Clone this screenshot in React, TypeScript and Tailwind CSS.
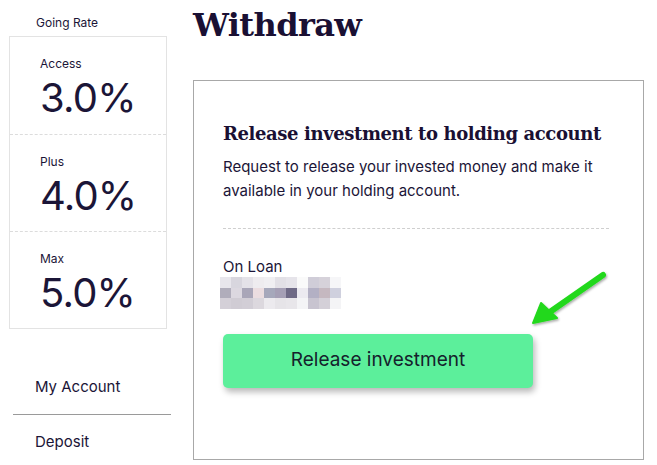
import type { ReactNode } from 'react'

const rates = [
  { label: 'Access', value: '3.0%' },
  { label: 'Plus', value: '4.0%' },
  { label: 'Max', value: '5.0%' },
]

// pixelated "amount" — the screenshot blurs it out
const blurRows = [
  ['#e8e6ec', '#d8d6de', '#e4e2e8', '#eeecef', '#f0eff2', '#e2e0e6', '#e6e4ea', '#fafafa', '#d0cdd8', '#d6d2da', '#f6f6f8'],
  ['#b0adbb', '#dcd8e0', '#a9a6b8', '#ebdde0', '#a6a8bb', '#a59fb5', '#6f6a86', '#eceaf0', '#b3b0c4', '#c5b8c0', '#cfd0de'],
  ['#d4d0d8', '#d0ccd4', '#d2ced6', '#dcd8de', '#eceaee', '#e6e4e8', '#e8e6ea', '#f4f4f6', '#c8c4d0', '#d4d0d8', '#f4f4f6'],
]

function RateCard() {
  return (
    <div className="border border-[#e3e3e3]">
      {rates.map((r, i) => (
        <div
          key={r.label}
          className={`h-[97px] pl-[30px] pt-[19px] ${i > 0 ? 'border-t border-dashed border-[#dcdcdc]' : ''}`}
        >
          <div className="text-[12px] leading-4 text-[#1b1537]">{r.label}</div>
          <div className="mt-[3px] text-[40px] leading-[46px] tracking-[-0.8px] text-[#1b1537]">{r.value}</div>
        </div>
      ))}
    </div>
  )
}

function NavLink({ children }: { children: ReactNode }) {
  return <div className="pl-[22px] text-[15px] leading-[20px] text-[#1b1537]">{children}</div>
}

function Arrow() {
  return (
    <svg className="absolute left-[525px] top-[265px]" width="90" height="68" viewBox="0 0 90 68">
      <defs>
        <filter id="sh" x="-20%" y="-20%" width="140%" height="140%">
          <feDropShadow dx="1" dy="1.5" stdDeviation="1.2" floodColor="#000" floodOpacity="0.35" />
        </filter>
      </defs>
      <g filter="url(#sh)">
        <line x1="78" y1="10" x2="22" y2="49" stroke="#22d81c" strokeWidth="6" strokeLinecap="round" />
        <path d="M8 58 L16 38 L32 53 Z" fill="#22d81c" stroke="#22d81c" strokeWidth="2" strokeLinejoin="round" />
      </g>
    </svg>
  )
}

export default function App() {
  return (
    <div className="relative flex h-[465px] w-[657px] overflow-hidden bg-white font-['Inter',sans-serif] text-[#1b1537]">
      <aside className="w-[193px] shrink-0 pl-[9px]">
        <div className="pl-[27px] pt-[15px] text-[12px] leading-[16px] text-[#1b1537]">Going Rate</div>
        <div className="mt-[5px] w-[158px]">
          <RateCard />
        </div>
        <nav className="mt-[48px] w-[162px] pl-[4px]">
          <NavLink>My Account</NavLink>
          <div className="mt-[17px] border-t border-[#9a9a9a]" />
          <div className="mt-[17px]">
            <NavLink>Deposit</NavLink>
          </div>
        </nav>
      </aside>

      <main className="pt-[4px]">
        <h1 className="font-['DejaVu_Serif',serif] text-[32px] font-bold leading-[42px] tracking-[-0.6px] text-[#1a1033]">
          Withdraw
        </h1>
        <section className="mt-[34px] h-[380px] w-[451px] border border-[#a8a8a8] pl-[29px] pr-[34px] pt-[40px]">
          <h2 className="font-['DejaVu_Serif',serif] text-[18px] font-bold leading-[26px] tracking-[-0.4px] text-[#1a1033]">
            Release investment to holding account
          </h2>
          <p className="mt-[8px] text-[15px] leading-[24px] text-[#1b1537]">
            Request to release your invested money and make it available in your holding account.
          </p>
          <div className="mt-[25px] border-t border-dashed border-[#cfcfcf]" />
          <div className="mt-[28px] text-[15px] leading-[20px] text-[#1b1537]">On Loan</div>
          <div className="-ml-[3px] flex flex-col">
            {blurRows.map((row, ri) => (
              <div key={ri} className="flex">
                {row.map((c, ci) => (
                  <div key={ci} className="h-[10.5px] w-[11px]" style={{ backgroundColor: c }} />
                ))}
              </div>
            ))}
          </div>
          <button
            type="button"
            className="mt-[25px] flex h-[54px] w-[310px] items-center justify-center rounded-[5px] bg-[#5cef9b] text-[19px] text-[#15212c] shadow-[2px_4px_6px_rgba(0,0,0,0.28)]"
          >
            Release investment
          </button>
        </section>
      </main>

      <Arrow />
    </div>
  )
}
